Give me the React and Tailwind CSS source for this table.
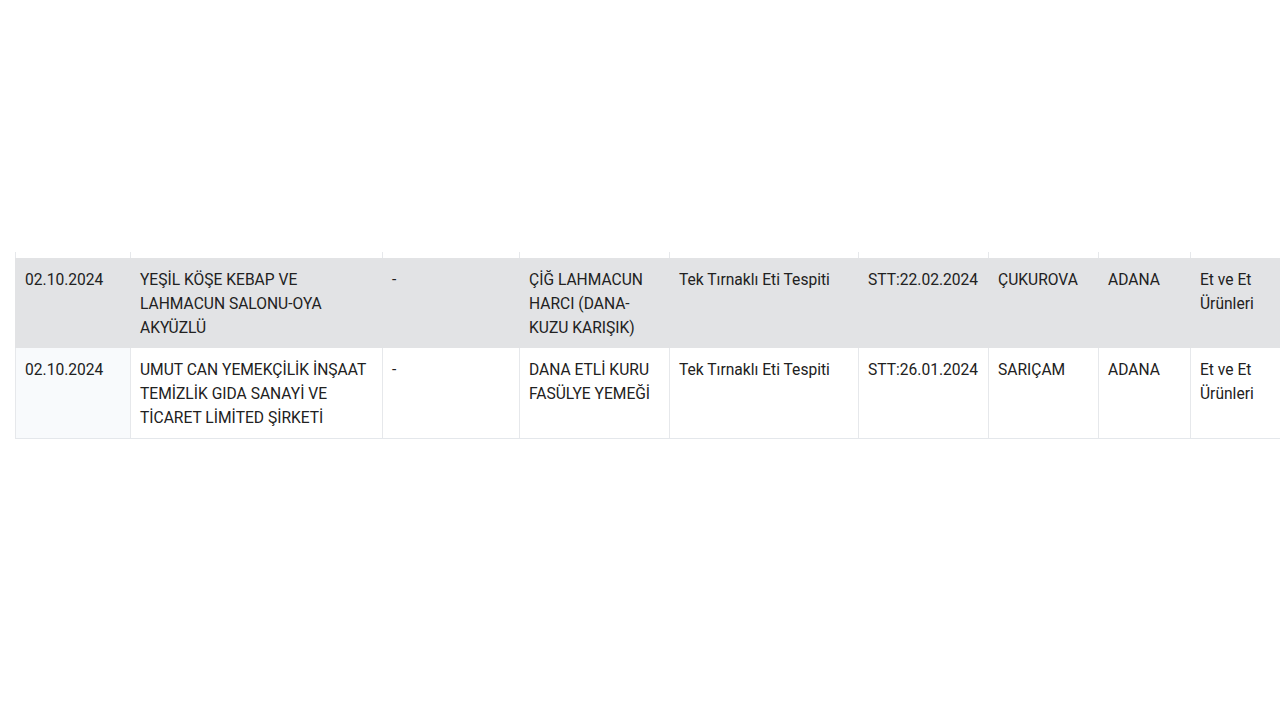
import React from "react";

const widths = ["w-[115px]", "w-[252px]", "w-[137px]", "w-[150px]", "w-[189px]", "w-[130px]", "w-[110px]", "w-[92px]", "w-[100px]"];

const rows = [
  ["02.10.2024", "YEŞİL KÖŞE KEBAP VE LAHMACUN SALONU-OYA AKYÜZLÜ", "-", "ÇİĞ LAHMACUN HARCI (DANA-KUZU KARIŞIK)", "Tek Tırnaklı Eti Tespiti", "STT:22.02.2024", "ÇUKUROVA", "ADANA", "Et ve Et Ürünleri"],
  ["02.10.2024", "UMUT CAN YEMEKÇİLİK İNŞAAT TEMİZLİK GIDA SANAYİ VE TİCARET LİMİTED ŞİRKETİ", "-", "DANA ETLİ KURU FASÜLYE YEMEĞİ", "Tek Tırnaklı Eti Tespiti", "STT:26.01.2024", "SARIÇAM", "ADANA", "Et ve Et Ürünleri"],
];

export default function App() {
  return (
    <div
      className="w-[1280px] h-[720px] bg-white overflow-hidden text-[#212121]"
      style={{ fontFamily: "Roboto, 'Liberation Sans', sans-serif" }}
    >
      <div className="h-[252px]" />
      <div className="flex pl-[15px] w-[1400px]">
        <div className="flex flex-col">
          {/* cut-off previous row */}
          <div className="flex h-[6px]">
            {widths.map((w, i) => (
              <div key={i} className={`${w} shrink-0 border-l border-[#e6e8eb] bg-white`} />
            ))}
          </div>
          {/* row 1 (highlighted) */}
          <div className="flex bg-[#e2e3e5] text-[15.6px] leading-[24px]">
            {rows[0].map((t, i) => (
              <div key={i} className={`${widths[i]} shrink-0 border-l border-[#e2e3e5] pl-[9px] pr-[5px] pt-[10px] pb-[8px]`}>
                {t}
              </div>
            ))}
          </div>
          {/* row 2 */}
          <div className="flex bg-white text-[15.6px] leading-[24px] border-b border-[#e4e7eb]">
            {rows[1].map((t, i) => (
              <div
                key={i}
                className={`${widths[i]} shrink-0 border-l border-[#e6e8eb] pl-[9px] pr-[5px] pt-[10px] pb-[8px] ${i === 0 ? "bg-[#f8fafc]" : ""}`}
              >
                {t}
              </div>
            ))}
          </div>
        </div>
      </div>
    </div>
  );
}
